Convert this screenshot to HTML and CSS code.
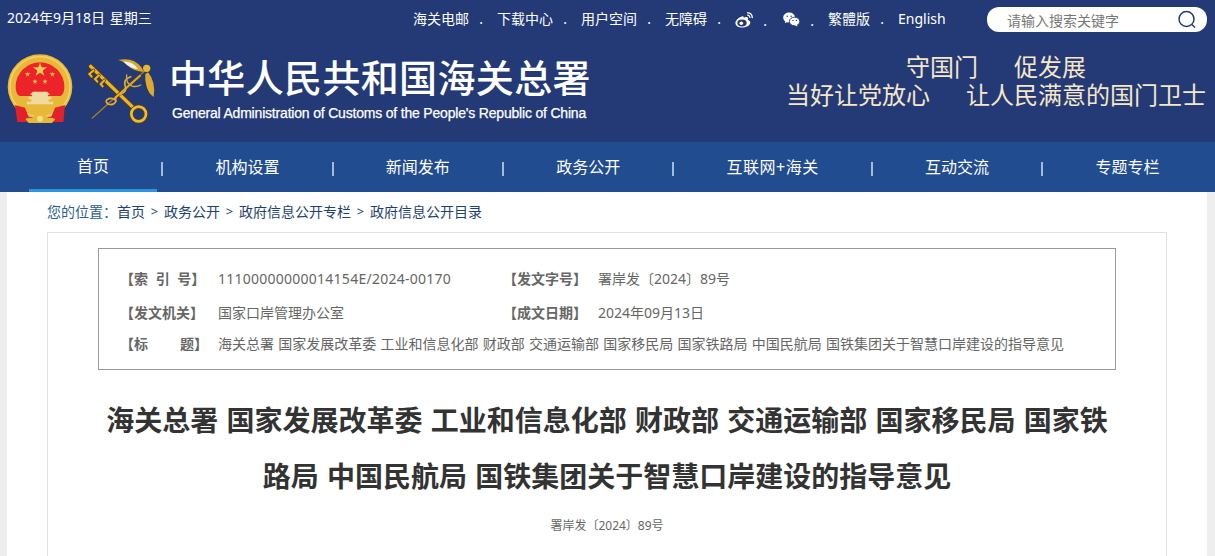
FILE: index.html
```html
<!DOCTYPE html>
<html>
<head>
    <meta charset="utf-8">
    <title>政府信息公开目录</title>
    <link rel="stylesheet" href="styles.css">
</head>
<body>
    <header class="header">
        <div class="topbar">
            <span class="date">2024年9月18日 星期三</span>
            <ul class="toplinks">
                <li>海关电邮</li>
                <li>下载中心</li>
                <li>用户空间</li>
                <li>无障碍</li>
                <li class="weibo">
                    <svg class="social" width="18" height="16" viewBox="0 0 18 16">
                        <path fill="#fff" d="M7.6 4.2C4 5 .4 8.200.4 11c0 2.900 3.500 4.600 7 4.600 4.500 0 7.900-2.500 7.900-5 0-1.800-1.800-2.500-2.500-2.700.7-1.500.4-2.700-1.300-2.900-1 0-2.200.3-2.800.7-.2-1.400-.4-1.700-1.100-1.500z"/>
                        <ellipse cx="7" cy="11" rx="4.700" ry="3.400" fill="#243a77"/>
                        <circle cx="6.300" cy="11.300" r="1.800" fill="#fff"/>
                        <path fill="none" stroke="#fff" stroke-width="1.300" d="M12 .9c3-.6 5.600 1.700 5.200 5.200M12.300 3.300c1.500-.3 2.700.9 2.500 2.500"/>
                    </svg>
                </li>
                <li>
                    <svg class="social" width="17" height="15" viewBox="0 0 18 15">
                        <ellipse cx="6.500" cy="5.500" rx="6.300" ry="5.300" fill="#fff"/>
                        <path fill="#fff" d="M2.500 8.500 2 11.500 5 9.500z"/>
                        <ellipse cx="12.300" cy="9.600" rx="5.500" ry="4.600" fill="#fff" stroke="#243a77"/>
                        <path fill="#fff" d="M14.500 12.500 15.500 15 12.500 13.500z"/>
                        <circle cx="4.500" cy="4" r=".8" fill="#243a77"/>
                        <circle cx="8.500" cy="4" r=".8" fill="#243a77"/>
                        <circle cx="10.500" cy="8.500" r=".7" fill="#243a77"/>
                        <circle cx="14.200" cy="8.500" r=".7" fill="#243a77"/>
                    </svg>
                </li>
                <li>繁體版</li>
                <li>English</li>
            </ul>
            <div class="search">
                <span class="search-text">请输入搜索关键字</span>
                <svg width="20" height="20" viewBox="0 0 20 20">
                    <circle cx="9.500" cy="9" r="7.500" fill="none" stroke="#243a77" stroke-width="1.500"/>
                    <path d="M15 14.500l3 3" stroke="#243a77" stroke-width="1.500"/>
                </svg>
            </div>
        </div>
        <div class="brand">
            <svg class="logos" width="165" height="90" viewBox="0 0 495 270">
                <circle cx="120" cy="125" r="97" fill="#e8b83a"/>
                <circle cx="120" cy="125" r="90" fill="none" stroke="#f6d568" stroke-width="4"/>
                <path fill="#ec2328" d="M47 125a73 73 0 1 1 146 0q0 22-12 28H59q-12-6-12-28z"/>
                <polygon fill="#f3cb4d" points="120,52 125,67 141,67 128,77 133,92 120,83 107,92 112,77 99,67 115,67"/>
                <polygon fill="#f3cb4d" points="83,80 85,85 91,85 86,89 88,95 83,91 78,95 80,89 75,85 81,85"/>
                <polygon fill="#f3cb4d" points="157,80 159,85 165,85 160,89 162,95 157,91 152,95 154,89 149,85 155,85"/>
                <polygon fill="#f3cb4d" points="105,102 107,107 113,107 108,111 110,117 105,113 100,117 102,111 97,107 103,107"/>
                <polygon fill="#f3cb4d" points="135,102 137,107 143,107 138,111 140,117 135,113 130,117 132,111 127,107 133,107"/>
                <path fill="#f1d9a0" d="M98 140h44l8 9h-6v6h10v8h-8v7h14v8H80v-8h14v-7h-8v-8h10v-6h-6z"/>
                <path fill="#e3212a" d="M45 180l30 8 12 30 45-2-12 15H52zM195 180l-30 8-12 30-35-2 10 15h62z"/>
                <path fill="#e8b83a" d="M76 222q14-6 20-2 8-14 24-15 16 1 24 15 6-4 22 2l-10 12H86z"/>
                <circle cx="120" cy="221" r="9" fill="#f8de7d"/>
                <g fill="none" stroke-linecap="round">
                    <path d="M438 74 277 219" stroke="#a87a26" stroke-width="4"/>
                    <path d="M272 64 402 190" stroke="#5e3e0c" stroke-width="15"/>
                    <path d="M272 64 402 190" stroke="#e8b62f" stroke-width="10"/>
                    <path d="M281 76l-13 11 7 8M297 91l-12 11 7 8M313 106l-11 11 6 7" stroke="#5e3e0c" stroke-width="10"/>
                    <path d="M281 76l-13 11 7 8M297 91l-12 11 7 8M313 106l-11 11 6 7" stroke="#e8b62f" stroke-width="6"/>
                    <circle cx="416" cy="207" r="22" stroke="#5e3e0c" stroke-width="13"/>
                    <circle cx="416" cy="207" r="22" stroke="#ecbc33" stroke-width="8"/>
                    <path d="M420 92 345 159" stroke="#5e3e0c" stroke-width="10"/>
                    <path d="M420 92 345 159" stroke="#dfaa2c" stroke-width="6"/>
                    <path d="M392 95q-24 8-16 30 6 16-14 22-20 6-14 22-8 14-24 8-12-10 2-16 14-4 22 6" stroke="#e3b02e" stroke-width="5"/>
                    <path d="M380 90q-4 26 18 34 14 2 24-4" stroke="#d3a63a" stroke-width="4"/>
                </g>
                <circle cx="440" cy="70" r="11" fill="#e8b62f"/>
                <path fill="#d9a72b" d="M354 45q46-10 70 22l8 14q-32-2-50-20-10-12-28-16z"/>
                <path fill="#eef1f2" d="M370 50q26-2 44 22-24-2-44-22z"/>
                <path fill="#dcaa2c" d="M444 82q24 28 17 74-15-10-21-30-6-22-4-38z"/>
                <path fill="#2a3350" d="M430 106l9 22 9 18q-13-14-20-32z"/>
            </svg>
            <div class="brand-name">
                <div class="brand-cn">中华人民共和国海关总署</div>
                <div class="brand-en">General Administration of Customs of the People's Republic of China</div>
            </div>
            <div class="slogan">
                <div class="slogan-line"><span>守国门</span><span>促发展</span></div>
                <div class="slogan-line"><span>当好让党放心</span><span>让人民满意的国门卫士</span></div>
            </div>
        </div>
    </header>

    <nav class="nav">
        <a class="nav-item active">首页</a>
        <i class="nav-sep"></i>
        <a class="nav-item">机构设置</a>
        <i class="nav-sep"></i>
        <a class="nav-item">新闻发布</a>
        <i class="nav-sep"></i>
        <a class="nav-item">政务公开</a>
        <i class="nav-sep"></i>
        <a class="nav-item nav-wide">互联网+海关</a>
        <i class="nav-sep"></i>
        <a class="nav-item">互动交流</a>
        <i class="nav-sep"></i>
        <a class="nav-item">专题专栏</a>
    </nav>

    <main class="page">
        <div class="crumbs">
            <span class="crumbs-label">您的位置&#65306;</span>
            <a>首页</a><span class="crumbs-sep">&gt;</span>
            <a>政务公开</a><span class="crumbs-sep">&gt;</span>
            <a>政府信息公开专栏</a><span class="crumbs-sep">&gt;</span>
            <a>政府信息公开目录</a>
        </div>
        <section class="card">
            <div class="info">
                <div class="info-row row-one">
                    <b class="info-label label-spaced">【索 引 号】</b>
                    <span class="info-value col-first value-id">11100000000014154E/2024-00170</span>
                    <b class="info-label label-second">【发文字号】</b>
                    <span class="info-value">署岸发〔2024〕89号</span>
                </div>
                <div class="info-row row-two">
                    <b class="info-label">【发文机关】</b>
                    <span class="info-value col-first">国家口岸管理办公室</span>
                    <b class="info-label label-second">【成文日期】</b>
                    <span class="info-value">2024年09月13日</span>
                </div>
                <div class="info-row row-three">
                    <b class="info-label">【标<span class="label-gap"></span>题】</b>
                    <span class="info-value value-long">海关总署 国家发展改革委 工业和信息化部 财政部 交通运输部 国家移民局 国家铁路局 中国民航局 国铁集团关于智慧口岸建设的指导意见</span>
                </div>
            </div>
            <h1 class="doc-title">海关总署 国家发展改革委 工业和信息化部 财政部 交通运输部 国家移民局 国家铁路局 中国民航局 国铁集团关于智慧口岸建设的指导意见</h1>
            <p class="doc-no">署岸发〔2024〕89号</p>
        </section>
    </main>
</body>
</html>
```

FILE: styles.css
```css
* { box-sizing: border-box; }
html, body { height: 556px; overflow: hidden; }
body { margin: 0; background: #eee; font-family: "Noto Sans", "Noto Sans CJK SC", "Liberation Sans", sans-serif; color: #333; }

.header { height: 142px; background: #243a77; color: #fff; }
.topbar { display: flex; align-items: center; height: 38px; padding: 0 8px 0 7px; font-size: 14px; }
.date { width: 406px; margin-top: -4px; white-space: nowrap; word-spacing: 1px; }
.toplinks { display: flex; align-items: center; width: 574px; margin: 0; padding: 0; list-style: none; }
.toplinks li { position: relative; display: flex; margin-right: 28px; line-height: 20px; white-space: nowrap; }
.toplinks li:not(:last-child)::after { content: "."; position: absolute; right: -14px; top: 0; }
.toplinks .weibo { margin-right: 30px; }
.social { display: block; margin-top: 1px; }
.search { display: flex; align-items: center; justify-content: space-between; width: 220px; height: 25px; padding: 0 10px 0 20px; background: #fff; border-radius: 12px; margin-top: 1px; }
.search-text { font-size: 14px; color: #777; }

.brand { display: flex; height: 104px; padding-top: 7px; }
.logos { display: block; }
.brand-name { margin-left: 6px; width: 615px; }
.brand-cn { font-size: 38px; font-weight: 500; letter-spacing: .35px; line-height: 54px; margin: 5px 0 0 -2px; white-space: nowrap; }
.brand-en { font-family: "Liberation Sans", sans-serif; font-size: 14px; letter-spacing: -.19px; -webkit-text-stroke: .25px #fff; line-height: 18px; margin-left: 1px; white-space: nowrap; }
.slogan { width: 420px; margin-top: 8px; color: #f6e7c6; font-size: 24px; line-height: 28px; white-space: nowrap; }
.slogan-line { display: flex; justify-content: center; gap: 36px; }

.nav { display: flex; align-items: stretch; gap: 3.2px; height: 50px; padding-left: 29px; background: #214d90; }
.nav-item { display: flex; align-items: center; height: 50px; padding: 0 48px 2px; color: #fff; font-size: 16px; white-space: nowrap; }
.nav-item.active { border-bottom: 3px solid #2b95e0; }
.nav-wide { letter-spacing: .5px; }
.nav-sep { flex: none; align-self: center; width: 2px; height: 14px; margin: 3px 1px 0; background: #a9bad2; }

.page { width: 1200px; height: 364px; margin-left: 7px; padding: 0 40px; background: #fff; }
.crumbs { display: flex; align-items: center; height: 40px; padding-bottom: 2px; font-size: 14px; color: #2b5f8f; }
.crumbs a { color: #1d4170; }
.crumbs-sep { width: 19px; text-align: center; font-size: 13px; color: #1d4170; }
.card { height: 324px; padding: 15px 50px 0; border: 1px solid #e0e0e0; border-bottom: 0; }
.info { height: 122px; padding-top: 15px; border: 1px solid #999; color: #666; font-size: 14px; }
.info-row { display: flex; align-items: center; height: 28px; padding-left: 21px; white-space: nowrap; }
.row-two { margin-top: 6px; }
.row-three { margin-top: 3px; }
.info-label { width: 98px; color: #666; }
.label-spaced { word-spacing: 4px; }
.label-second { width: 95px; }
.label-gap { display: inline-block; width: 32px; }
.col-first { width: 285px; }
.value-id { letter-spacing: .25px; }
.value-long { word-spacing: .6px; }
.doc-title { margin: 22px 0 0; font-size: 28px; font-weight: bold; line-height: 56px; text-align: center; word-spacing: 1px; color: #333; }
.doc-no { margin: 13px 0 0; font-size: 12px; line-height: 18px; text-align: center; color: #666; }
```
